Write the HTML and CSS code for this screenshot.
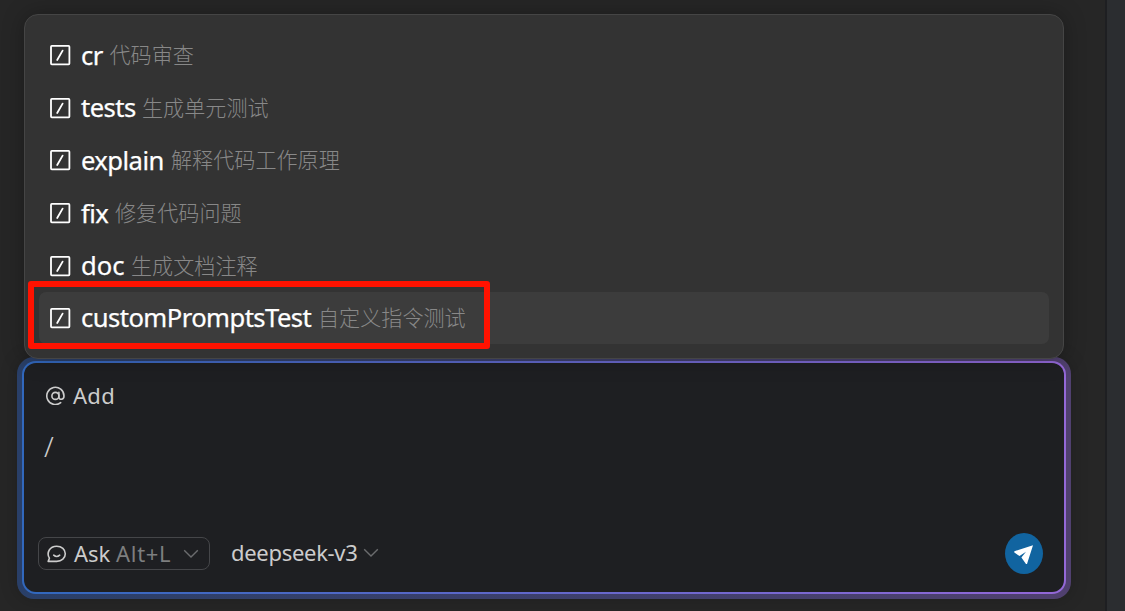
FILE: index.html
```html
<!DOCTYPE html>
<html lang="zh-CN">
<head>
    <meta charset="UTF-8">
    <title>Chat</title>
    <link rel="stylesheet" href="styles.css">
</head>
<body>
    <svg class="defs">
        <symbol id="slash" viewBox="0 0 22 22">
            <rect x="1" y="1.9" width="18.4" height="18.4" rx="0.8" fill="none" stroke="#fff" stroke-width="1.8"/>
            <path d="M12.6 6.6L7.2 16" fill="none" stroke="#fff" stroke-width="1.8" stroke-linecap="round"/>
        </symbol>
        <symbol id="arrow" viewBox="0 0 16 10">
            <path d="M1.2 1.2L8 8L14.8 1.2" fill="none" stroke="#6b6c6e" stroke-width="1.4"/>
        </symbol>
    </svg>
    <div class="page">
        <div class="panel">
            <ul class="commands">
                <li class="item"><svg class="icon"><use href="#slash"/></svg><span class="name cr">cr</span><span class="desc">代码审查</span></li>
                <li class="item"><svg class="icon"><use href="#slash"/></svg><span class="name tests">tests</span><span class="desc">生成单元测试</span></li>
                <li class="item"><svg class="icon"><use href="#slash"/></svg><span class="name explain">explain</span><span class="desc">解释代码工作原理</span></li>
                <li class="item"><svg class="icon"><use href="#slash"/></svg><span class="name fix">fix</span><span class="desc">修复代码问题</span></li>
                <li class="item"><svg class="icon"><use href="#slash"/></svg><span class="name doc">doc</span><span class="desc">生成文档注释</span></li>
                <li class="item active"><svg class="icon"><use href="#slash"/></svg><span class="name custom">customPromptsTest</span><span class="desc">自定义指令测试</span></li>
            </ul>
            <div class="glow">
                <div class="ring">
                    <div class="chat">
                        <div class="add">
                            <svg class="at" viewBox="0 0 20 20">
                                <circle cx="9.4" cy="10.9" r="3.5"/>
                                <path d="M12.9 7.4V11.9C12.9 15.3 18 15 18 10.9A8.6 8.6 0 1 0 14.7 17.7"/>
                            </svg>
                            <span>Add</span>
                        </div>
                        <div class="text">/</div>
                        <div class="bottom">
                            <div class="mode">
                                <svg class="bubble" viewBox="0 0 20 18">
                                    <path d="M1.2 16.4L2.4 13.2C-0.8 8 2.5 1.2 9.7 1.2C14.7 1.2 18.3 4.6 18.3 8.8C18.3 13 14.7 16.4 9.7 16.4Z"/>
                                    <path d="M6.7 10.2Q9.7 12.8 12.7 10.2"/>
                                </svg>
                                <span class="ask">Ask</span>
                                <span class="key">Alt+L</span>
                                <svg class="down"><use href="#arrow"/></svg>
                            </div>
                            <span class="model">deepseek-v3</span>
                            <svg class="down model-down"><use href="#arrow"/></svg>
                            <div class="send">
                                <svg viewBox="0 0 20 20">
                                    <path d="M19 1.3L0.3 7.2V8.6L5.5 12L12 7.8L7.4 13.6L12 20H13Z" fill="#fff"/>
                                </svg>
                            </div>
                        </div>
                    </div>
                </div>
            </div>
        </div>
        <div class="side"></div>
    </div>
    <div class="mark"></div>
</body>
</html>
```

FILE: styles.css
```css
* {margin: 0;padding: 0;box-sizing: border-box;}

body{
    height: 611px;
    overflow: hidden;
    background-color: #262626;
    font-family: "Noto Sans", "Noto Sans CJK SC", sans-serif;
}
svg{
    display: block;
    flex: none;
}
.defs{
    display: none;
}
.page{
    display: flex;
    height: 611px;
}
.panel{
    width: 1105px;
    padding-top: 14px;
}
.side{
    flex: 1;
    border-left: 2px solid #1e1f22;
    background-color: #2b2d30;
}

/* 指令列表 */
.commands{
    position: relative;
    z-index: 1;
    width: 1040px;
    height: 345px;
    margin-left: 24px;
    padding: 14px;
    border: 1px solid #454545;
    border-radius: 14px;
    background-color: #333;
    box-shadow: 0 0 22px rgba(0,0,0,0.28);
    list-style: none;
}
.item{
    display: flex;
    align-items: center;
    height: 52.6px;
    padding-left: 11px;
    border-radius: 7px;
    white-space: nowrap;
}
.active{
    height: 52px;
    background-color: #3c3c3c;
}
.icon{
    width: 22px;
    height: 22px;
    margin-right: 9px;
}
.name{
    color: #fff;
    font-size: 25.6px;
    letter-spacing: -0.55px;
    -webkit-text-stroke: 0.25px #fff;
}
.cr{width: 28.5px;}
.tests{width: 61px;}
.explain{width: 90px;}
.fix{width: 34px;}
.doc{
    width: 50px;
    letter-spacing: 0;
}
.custom{width: 237px;}
.desc{
    padding-bottom: 2px;
    color: #888;
    font-family: "Noto Sans CJK SC", sans-serif;
    font-size: 21.1px;
    font-weight: 300;
}

/* 输入框 */
.glow{
    width: 1054px;
    height: 242px;
    margin: -2px 0 0 17px;
    padding: 4px 5px 5px;
    border-radius: 17px;
    background: linear-gradient(90deg, #293f68, #50406f);
    box-shadow: 0 0 18px rgba(0,0,0,0.2);
}
.ring{
    height: 233px;
    padding: 2px;
    border-radius: 14px;
    background: linear-gradient(90deg, #3168bd, #9468d8);
}
.chat{
    display: flex;
    flex-direction: column;
    height: 229px;
    padding: 15px 21px 18px 14px;
    border-radius: 12px;
    background-color: #1e1f22;
    color: #ccc;
    font-size: 22px;
    white-space: nowrap;
}
.add{
    display: flex;
    align-items: center;
    height: 34px;
    padding-left: 8px;
    gap: 7px;
    letter-spacing: 0.3px;
}
.at, .bubble{
    width: 20px;
    height: 20px;
    fill: none;
    stroke: #ccc;
    stroke-width: 1.6;
    stroke-linecap: round;
    stroke-linejoin: round;
}
.text{
    padding: 14px 0 0 6px;
    font-size: 28px;
    font-weight: 300;
    line-height: 40px;
}
.bottom{
    display: flex;
    align-items: center;
    height: 41px;
    margin-top: auto;
}
.mode{
    display: flex;
    align-items: center;
    width: 172px;
    height: 33px;
    padding: 0 10px 0 8px;
    border: 1px solid #454649;
    border-radius: 8px;
}
.ask{
    width: 42px;
    margin-left: 7px;
    padding-bottom: 2px;
}
.key{
    padding-bottom: 2px;
    color: #7d7e7f;
    letter-spacing: 0.7px;
}
.down{
    width: 16px;
    height: 10px;
    margin-left: auto;
}
.model{
    width: 126px;
    margin-left: 21px;
    padding-bottom: 3px;
    letter-spacing: -0.3px;
}
.model-down{
    margin: 0 0 2px 6px;
}
.send{
    display: flex;
    align-items: center;
    justify-content: center;
    width: 38px;
    height: 41px;
    margin-left: auto;
    border-radius: 50%;
    background-color: #1164a0;
}
.send svg{
    width: 20px;
    height: 20px;
}

/* 红色标注框 */
.mark{
    position: absolute;
    z-index: 2;
    left: 28px;
    top: 281px;
    width: 462px;
    height: 68px;
    border: 6px solid #ff1200;
    border-radius: 3px;
}
```
